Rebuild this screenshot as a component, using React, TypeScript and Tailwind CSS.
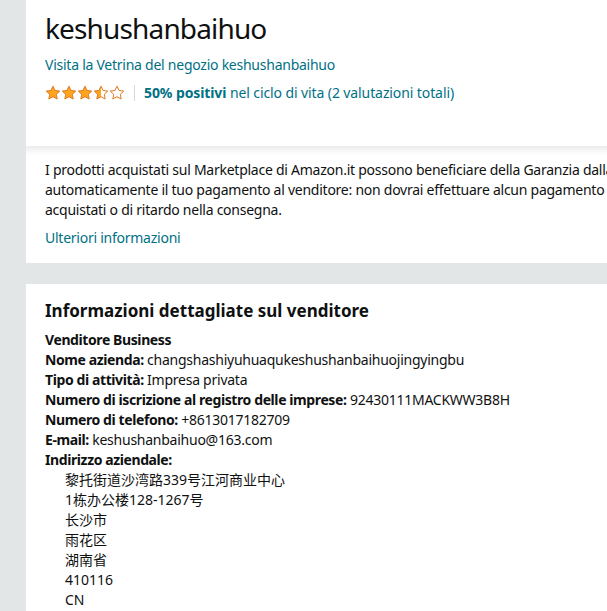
import React from 'react';

const font = { fontFamily: '"Noto Sans", "Noto Sans CJK SC", sans-serif' };

function Star({ fill }: { fill: 'full' | 'half' | 'empty' }) {
  const d = 'M8 1.2l2.05 4.3 4.7.6-3.45 3.25.88 4.65L8 11.7 3.82 14l.88-4.65L1.25 6.1l4.7-.6z';
  return (
    <svg width="16" height="16" viewBox="0 0 16 16">
      {fill === 'half' && (
        <defs>
          <linearGradient id="star-half">
            <stop offset="50%" stopColor="#ffa41c" />
            <stop offset="50%" stopColor="#ffffff" />
          </linearGradient>
        </defs>
      )}
      <path
        d={d}
        fill={fill === 'full' ? '#ffa41c' : fill === 'half' ? 'url(#star-half)' : '#ffffff'}
        stroke="#de7921"
        strokeWidth="1"
        strokeLinejoin="round"
      />
    </svg>
  );
}

function Field({ label, value }: { label: string; value?: string }) {
  return (
    <div className="whitespace-nowrap">
      <span className="font-bold tracking-[-0.4px]">{label}</span>
      {value && <span> {value}</span>}
    </div>
  );
}

export default function App() {
  const address = [
    '黎托街道沙湾路339号江河商业中心',
    '1栋办公楼128-1267号',
    '长沙市',
    '雨花区',
    '湖南省',
    '410116',
    'CN',
  ];

  return (
    <div className="w-[607px] h-[611px] overflow-hidden bg-[#e3e6e6] text-[#0f1111]" style={font}>
      <div className="ml-[26px] w-[900px] flex flex-col">
        <div className="bg-white pl-[19px] pt-[10px] h-[146px]">
          <h1 className="text-[28px] leading-[36px] font-normal tracking-[-0.85px]">keshushanbaihuo</h1>
          <div className="mt-[9px] text-[14px] leading-[20px] tracking-[-0.25px] text-[#007185]">
            Visita la Vetrina del negozio keshushanbaihuo
          </div>
          <div className="mt-[8px] flex items-center text-[14px] leading-[20px]">
            <div className="flex">
              <Star fill="full" />
              <Star fill="full" />
              <Star fill="full" />
              <Star fill="half" />
              <Star fill="empty" />
            </div>
            <div className="mx-[9px] h-[16px] w-px bg-[#d5d9d9]" />
            <span className="text-[#007185] tracking-[-0.1px]">
              <span className="font-bold">50% positivi</span> nel ciclo di vita (2 valutazioni totali)
            </span>
          </div>
        </div>

        <div className="bg-white pl-[19px] pt-[14px] h-[117px] shadow-[inset_0_12px_10px_-10px_rgba(0,0,0,0.12)] text-[14px] leading-[20px] tracking-[-0.25px]">
          <p className="whitespace-nowrap">
            I prodotti acquistati sul Marketplace di Amazon.it possono beneficiare della Garanzia dalla A alla Z di Amazon. Se hai effettuato un ordine e il venditore non
          </p>
          <p className="whitespace-nowrap">
            automaticamente il tuo pagamento al venditore: non dovrai effettuare alcun pagamento ulteriore in caso di mancata ricezione degli articoli
          </p>
          <p className="whitespace-nowrap">acquistati o di ritardo nella consegna.</p>
          <div className="mt-[8px] text-[#007185]">Ulteriori informazioni</div>
        </div>

        <div className="mt-[21px] bg-white pl-[19px] pt-[14px] pb-[20px] text-[14px] leading-[20px] tracking-[-0.25px]">
          <h2 className="text-[17px] leading-[26px] font-bold mb-[6px] tracking-normal">Informazioni dettagliate sul venditore</h2>
          <Field label="Venditore Business" />
          <Field label="Nome azienda:" value="changshashiyuhuaqukeshushanbaihuojingyingbu" />
          <Field label="Tipo di attività:" value="Impresa privata" />
          <Field label="Numero di iscrizione al registro delle imprese:" value="92430111MACKWW3B8H" />
          <Field label="Numero di telefono:" value="+8613017182709" />
          <Field label="E-mail:" value="keshushanbaihuo@163.com" />
          <Field label="Indirizzo aziendale:" />
          <div className="pl-[20px] tracking-normal">
            {address.map((line) => (
              <div key={line}>{line}</div>
            ))}
          </div>
        </div>
      </div>
    </div>
  );
}
